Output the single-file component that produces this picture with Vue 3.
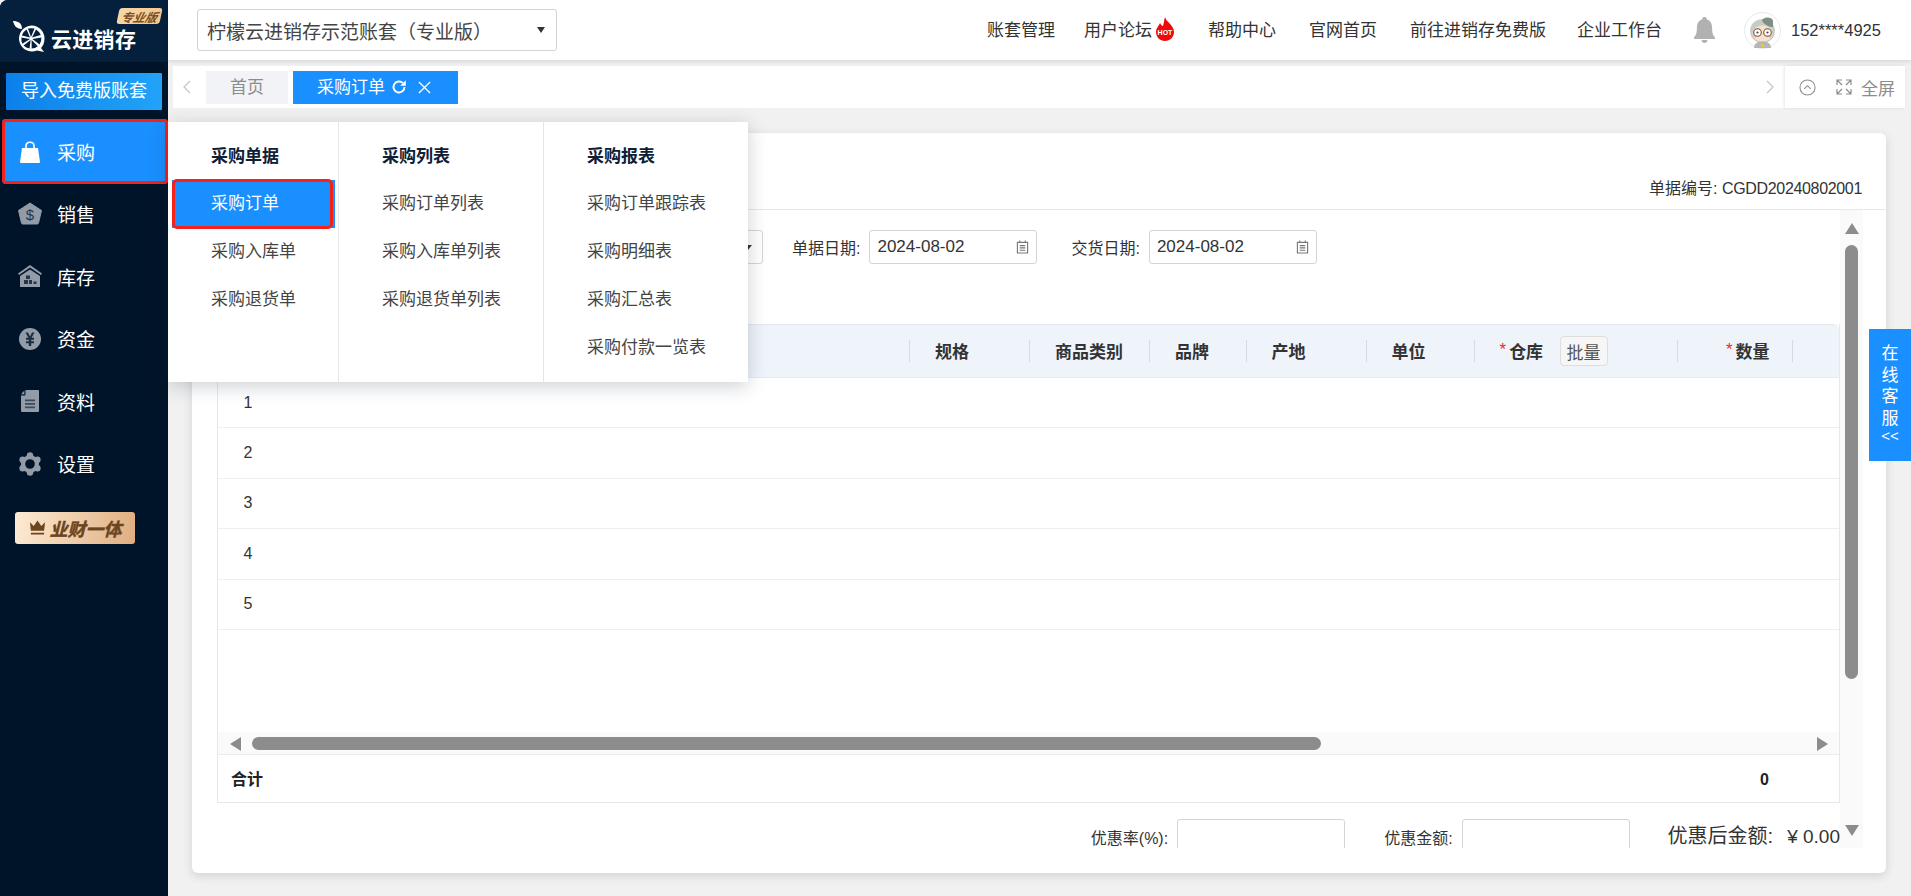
<template>
  <div class="app">
    <aside class="sidebar">
      <div class="logo">
        <svg class="logo-icon" viewBox="0 0 32 32" width="32" height="32">
          <path d="M0 0 C5 0 9 2 9 8 C4 8 1 5 0 0Z" fill="#fff" />
          <path d="M18.5 4.5 A13 13 0 0 1 31.5 17.5 C31.5 22 30 25 28 27 L31 31 L24 29.5 A13 13 0 1 1 18.5 4.5Z" fill="#fff" />
          <g fill="#04203d">
            <path d="M18 16 L15 7.6 Q18.5 6.8 21.5 7.6Z" />
            <path d="M19 16.4 L23 8.6 Q26.6 10.8 27.8 14Z" />
            <path d="M19.4 18 L28.3 16.6 Q28.6 20.6 26.6 23.4Z" />
            <path d="M18.6 19 L24.8 25.2 Q22 27.4 18.6 27.6Z" />
            <path d="M17.6 19 L16.6 27.4 Q13 27 10.6 24.6Z" />
            <path d="M17 18 L9.4 22.8 Q8 20 8.4 16.4Z" />
            <path d="M17 16.6 L8.8 14.6 Q10 10.6 13.6 8.6Z" />
          </g>
        </svg>
        <span class="logo-text">云进销存</span>
        <span class="logo-tag"><i>专业版</i></span>
      </div>
      <div class="import-btn">导入免费版账套</div>
      <ul class="menu">
        <li v-for="item in menu" :key="item.name" class="menu-item" :class="{ active: item.active }">
          <svg class="menu-icon" viewBox="0 0 24 24" width="24" height="24" v-html="item.icon"></svg>
          <span>{{ item.name }}</span>
        </li>
      </ul>
      <div class="vip">
        <svg viewBox="0 0 18 16" width="17" height="16"><path d="M1 2 L5 6 L9 0 L13 6 L17 2 L16 11 H2Z M2 13 H16 V15 H2Z" fill="#6b4420" /></svg>
        <span>业财一体</span>
      </div>
    </aside>

    <div class="main">
      <header class="topbar">
        <div class="account-select">
          <span>柠檬云进销存示范账套（专业版）</span>
          <i class="caret"></i>
        </div>
        <nav class="top-nav">
          <a class="first">账套管理</a>
          <a class="forum">用户论坛
            <svg viewBox="0 0 20 24" width="20" height="24">
              <path d="M10 0 C11 5 19 8 19 15 C19 20 15 24 10 24 C5 24 1 20 1 15 C1 11 4 9 5 6 C6 8 7 9 8 9 C9 6 9 3 10 0Z" fill="#ee0a0a" />
              <text x="10" y="18" text-anchor="middle" class="hot-text">HOT</text>
            </svg>
          </a>
          <a>帮助中心</a>
          <a>官网首页</a>
          <a>前往进销存免费版</a>
          <a>企业工作台</a>
        </nav>
        <svg class="bell" viewBox="0 0 18 26" width="21" height="26" preserveAspectRatio="none">
          <path d="M9 0 C10.5 0 11 1 11 2.4 C14.5 3.6 15.5 7 15.5 11 C15.5 16 16.5 18.5 18 20.5 V22 H0 V20.5 C1.5 18.5 2.5 16 2.5 11 C2.5 7 3.5 3.6 7 2.4 C7 1 7.5 0 9 0Z M6.5 23 H11.5 C11.5 25 10.3 26 9 26 C7.7 26 6.5 25 6.5 23Z" fill="#b1b1b1" />
        </svg>
        <div class="avatar">
          <svg viewBox="0 0 37 37" width="37" height="37">
            <circle cx="18.5" cy="18.5" r="18" fill="#fff" stroke="#e8e8e8" />
            <ellipse cx="18.5" cy="19" rx="12.5" ry="12" fill="#c8ccc6" />
            <path d="M18 9 C18 5 28 4 29 9 L29 15 C25 15 21 13 18 9Z" fill="#7e8f83" />
            <ellipse cx="18.5" cy="21.5" rx="10" ry="8" fill="#f5e3d2" />
            <circle cx="10.5" cy="24" r="2" fill="#f4c4b8" />
            <circle cx="26.5" cy="24" r="2" fill="#f4c4b8" />
            <circle cx="13.5" cy="20.5" r="3.8" fill="#fff" stroke="#7a5234" stroke-width="1.1" />
            <circle cx="23.5" cy="20.5" r="3.8" fill="#fff" stroke="#7a5234" stroke-width="1.1" />
            <circle cx="13.5" cy="20.5" r="1.1" fill="#444" />
            <circle cx="23.5" cy="20.5" r="1.1" fill="#444" />
            <path d="M10 36 C10 31 14 29.5 18.5 29.5 C23 29.5 27 31 27 36Z" fill="#b4b8b4" />
            <circle cx="18.5" cy="33.5" r="1.8" fill="#f2c230" />
          </svg>
        </div>
        <span class="phone">152****4925</span>
      </header>

      <div class="tabs">
        <div class="tabs-left">
          <svg class="chev" viewBox="0 0 8 14" width="8" height="14"><path d="M7 1 L1 7 L7 13" fill="none" stroke="#c4c4c4" stroke-width="1.2" /></svg>
          <div class="tab">首页</div>
          <div class="tab current">
            <span>采购订单</span>
            <svg viewBox="0 0 16 16" width="16" height="16"><path d="M13.5 8 A5.5 5.5 0 1 1 11.8 4" fill="none" stroke="#fff" stroke-width="1.9" /><path d="M14.8 1.2 V6.8 H9.2Z" fill="#fff" /></svg>
            <svg viewBox="0 0 14 14" width="13" height="13"><path d="M1 1 L13 13 M13 1 L1 13" stroke="#fff" stroke-width="1.4" /></svg>
          </div>
        </div>
        <svg class="chev" viewBox="0 0 8 14" width="8" height="14"><path d="M1 1 L7 7 L1 13" fill="none" stroke="#c4c4c4" stroke-width="1.2" /></svg>
        <div class="tabs-tools">
          <svg viewBox="0 0 18 18" width="17" height="17"><circle cx="9" cy="9" r="8" fill="none" stroke="#8c8c8c" stroke-width="1.1" /><path d="M5.5 10.5 L9 7 L12.5 10.5" fill="none" stroke="#8c8c8c" stroke-width="1.1" /></svg>
          <span class="full">
            <svg viewBox="0 0 16 16" width="16" height="16"><path d="M6 1 H1 V6 M1 1 L6 6 M10 1 H15 V6 M15 1 L10 6 M1 10 V15 H6 M1 15 L6 10 M15 10 V15 H10 M15 15 L10 10" fill="none" stroke="#8c8c8c" stroke-width="1.2" /></svg>
            全屏
          </span>
        </div>
      </div>

      <section class="card">
        <div class="card-head">单据编号: <span class="bill-no">CGDD20240802001</span></div>
        <div class="card-body">
          <div class="bill">
            <div class="form-row">
              <div class="field supplier"><i class="caret small"></i></div>
              <label class="date-label">单据日期:</label>
              <div class="field date">2024-08-02<svg viewBox="0 0 14 15" width="13" height="14"><path d="M1.5 2.5 H12.5 V14 H1.5Z M4 .5 V3 M10 .5 V3 M4 6 H10 M4 8.5 H10 M4 11 H10" fill="none" stroke="#777" stroke-width="1.2" /></svg></div>
              <label class="date-label second">交货日期:</label>
              <div class="field date">2024-08-02<svg viewBox="0 0 14 15" width="13" height="14"><path d="M1.5 2.5 H12.5 V14 H1.5Z M4 .5 V3 M10 .5 V3 M4 6 H10 M4 8.5 H10 M4 11 H10" fill="none" stroke="#777" stroke-width="1.2" /></svg></div>
            </div>

            <div class="table">
              <div class="thead">
                <div class="th"></div>
                <div v-for="col in columns" :key="col.name" class="th" :class="{ right: col.right }">
                  <em v-if="col.required">*</em>{{ col.name }}
                  <button v-if="col.batch" class="batch">批量</button>
                </div>
                <div class="th last"></div>
              </div>
              <div v-for="n in 5" :key="n" class="tr"><span>{{ n }}</span></div>
              <div class="table-space"></div>
              <div class="hscroll">
                <i class="arrow-left"></i>
                <div class="hthumb"></div>
                <i class="arrow-right"></i>
              </div>
              <div class="total">
                <b>合计</b>
                <b class="total-num">0</b>
              </div>
            </div>

            <div class="discount">
              <label>优惠率(%):</label>
              <div class="discount-input"></div>
              <label class="gap">优惠金额:</label>
              <div class="discount-input"></div>
              <span class="after">优惠后金额:</span>
              <span class="after-num">¥ 0.00</span>
            </div>
          </div>
          <div class="vscroll">
            <i class="arrow-up"></i>
            <div class="vthumb"></div>
            <i class="arrow-down"></i>
          </div>
        </div>
      </section>
    </div>

    <!-- 采购 flyout -->
    <div class="flyout">
      <div v-for="(group, i) in flyout" :key="group.title" class="fly-col">
        <h4>{{ group.title }}</h4>
        <a v-for="link in group.links" :key="link" :class="{ on: i === 0 && link === '采购订单' }">{{ link }}</a>
      </div>
    </div>

    <div class="service">
      <span>在</span><span>线</span><span>客</span><span>服</span>
      <small>&lt;&lt;</small>
    </div>
  </div>
</template>

<script setup>
const gray = '#929ba8'

const menu = [
  {
    name: '采购',
    active: true,
    icon: '<path d="M2 22 L4 8 H20 L22 22 Q22 23 21 23 H3 Q2 23 2 22Z" fill="#fff"/><path d="M8 11 V6 C8 1 16 1 16 6 V11" fill="none" stroke="#fff" stroke-width="1.6"/>'
  },
  {
    name: '销售',
    icon: `<path d="M12 1 L23.5 8.5 L20.5 21 Q20.3 22 19 22 H5 Q3.7 22 3.5 21 L.5 8.5Z" fill="${gray}" stroke="${gray}" stroke-linejoin="round"/><text x="12" y="18" text-anchor="middle" font-size="15" font-family="Liberation Sans" font-weight="400" fill="#25364a">$</text>`
  },
  {
    name: '库存',
    icon: `<path d="M12 1 L24 9.5 L23 11 L12 3.5 L1 11 L0 9.5Z" fill="${gray}"/><path d="M2 12 L12 5.5 L22 12 V23 H2Z" fill="${gray}"/><path d="M8 11.5 H12 V15 H8Z M6 16 H10 V20 H6Z M11 16 H14 V20 H11Z M15.5 17.5 H18.5 V20 H15.5Z" fill="#25364a"/>`
  },
  {
    name: '资金',
    icon: `<circle cx="12" cy="12" r="11" fill="${gray}"/><path d="M7.5 5.5 L10 5.5 L12 9.5 L14 5.5 L16.5 5.5 L13.6 10.8 H16 V12.8 H13.2 V14.2 H16 V16.2 H13.2 V19 H10.8 V16.2 H8 V14.2 H10.8 V12.8 H8 V10.8 H10.4Z" fill="#1b2d42"/>`
  },
  {
    name: '资料',
    icon: `<path d="M7.5 1 H20 Q21 1 21 2 V22 Q21 23 20 23 H4 Q3 23 3 22 V6.5 H6.5 Q7.5 6.5 7.5 5.5Z" fill="${gray}"/><path d="M3 5.2 L6.4 1.4 V5.2Z" fill="${gray}"/><path d="M7 10.5 H17 V12.3 H7Z M7 14 H17 V15.8 H7Z M7 17.5 H17 V19.3 H7Z" fill="#3c4a5b"/>`
  },
  {
    name: '设置',
    icon: `<g fill="${gray}"><circle cx="12" cy="12" r="9"/><circle cx="12" cy="3.4" r="3.2"/><circle cx="12" cy="20.6" r="3.2"/><circle cx="4.6" cy="7.7" r="3.2"/><circle cx="19.4" cy="7.7" r="3.2"/><circle cx="4.6" cy="16.3" r="3.2"/><circle cx="19.4" cy="16.3" r="3.2"/></g><circle cx="12" cy="12" r="4.8" fill="#001429"/>`
  }
]

const columns = [
  { name: '规格' },
  { name: '商品类别' },
  { name: '品牌' },
  { name: '产地' },
  { name: '单位' },
  { name: '仓库', required: true, batch: true },
  { name: '数量', required: true, right: true }
]

const flyout = [
  { title: '采购单据', links: ['采购订单', '采购入库单', '采购退货单'] },
  { title: '采购列表', links: ['采购订单列表', '采购入库单列表', '采购退货单列表'] },
  { title: '采购报表', links: ['采购订单跟踪表', '采购明细表', '采购汇总表', '采购付款一览表'] }
]
</script>

<style>
html,
body {
  margin: 0;
  background: #f1f1f1;
  overflow: hidden;
}
</style>

<style scoped>
.app {
  position: relative;
  display: flex;
  width: 1911px;
  height: 896px;
  overflow: hidden;
  background: #f1f1f1;
  font-family: "Liberation Sans", "Noto Sans CJK SC", sans-serif;
  color: #333;
}

.sidebar {
  width: 168px;
  flex: none;
  background: #001429;
  color: #fff;
  border-top-left-radius: 8px;
}

.logo {
  position: relative;
  height: 62px;
  background: #04203d;
  border-top-left-radius: 8px;
  display: flex;
  align-items: flex-start;
  padding-left: 13px;
  box-sizing: border-box;
}

.logo-icon {
  flex: none;
  margin: 21px 6px 0 0;
}

.logo-text {
  margin-top: 27px;
  line-height: 26px;
  font-size: 21px;
  font-weight: 700;
  white-space: nowrap;
  letter-spacing: 0.3px;
}

.logo-tag {
  position: absolute;
  left: 118px;
  top: 8px;
  width: 43px;
  height: 16px;
  border-radius: 3px;
  background: linear-gradient(90deg, #f8d6a8, #f2c890);
  transform: skewX(-12deg);
  display: flex;
  align-items: center;
  justify-content: center;
}

.logo-tag i {
  font-size: 12px;
  font-weight: 700;
  color: #7a4f22;
}

.import-btn {
  margin: 11px 6px 0;
  height: 37px;
  line-height: 37px;
  text-align: center;
  font-size: 18px;
  background: linear-gradient(90deg, #0c80ea, #22a3f8);
  border-radius: 1px;
  white-space: nowrap;
}

.menu {
  list-style: none;
  margin: 9px 0 0;
  padding: 0;
}

.menu-item {
  display: flex;
  align-items: center;
  height: 62.5px;
  padding-left: 18px;
  font-size: 19px;
  box-sizing: border-box;
}

.menu-icon {
  margin-right: 15px;
  flex: none;
}

.menu-item.active {
  background: #1a8fff;
  outline: 3px solid #f5211b;
  outline-offset: -3px;
  border-radius: 4px;
  height: 65px;
  margin: 0 0 -1.5px 2px;
  padding-left: 16px;
}

.vip {
  margin: 17px 0 0 15px;
  width: 120px;
  height: 32px;
  border-radius: 3px;
  background: linear-gradient(100deg, #fdebd5, #dfae80);
  color: #6b4420;
  display: flex;
  align-items: center;
  justify-content: center;
  gap: 4px;
  font-size: 18px;
  font-weight: 700;
  font-style: italic;
  -webkit-text-stroke: 0.4px #6b4420;
  white-space: nowrap;
}

.main {
  flex: 1;
  min-width: 0;
  display: flex;
  flex-direction: column;
}

.topbar {
  height: 60px;
  flex: none;
  background: #fff;
  display: flex;
  align-items: center;
  padding-left: 29px;
  box-shadow: 0 1px 5px rgba(0, 0, 0, 0.14);
  position: relative;
}

.account-select {
  width: 360px;
  height: 42px;
  box-sizing: border-box;
  border: 1px solid #d3d3d3;
  border-radius: 3px;
  padding: 0 11px 0 9px;
  display: flex;
  align-items: center;
  justify-content: space-between;
  font-size: 19px;
  color: #444;
  white-space: nowrap;
}

.caret {
  width: 0;
  height: 0;
  border: 4.5px solid transparent;
  border-top: 6px solid #333;
  border-bottom: 0;
}

.top-nav {
  margin-left: 430px;
  padding-bottom: 3px;
  display: flex;
  align-items: center;
  font-size: 17px;
  color: #333;
}

.top-nav a {
  margin-right: 33px;
  white-space: nowrap;
  display: flex;
  align-items: center;
  height: 24px;
}

.top-nav a.first {
  margin-right: 29px;
}

.top-nav a:nth-last-child(2) {
  margin-right: 31px;
}

.top-nav a:last-child {
  margin-right: 30px;
}

.top-nav .forum svg {
  margin-left: 3px;
}

.hot-text {
  font-family: "Liberation Sans", sans-serif;
  font-size: 7px;
  font-weight: 700;
  fill: #fff;
}

.bell {
  margin-left: 2px;
  flex: none;
}

.avatar {
  margin-left: 29px;
  height: 37px;
  flex: none;
}

.phone {
  margin-left: 10px;
  font-size: 16.5px;
  color: #333;
  white-space: nowrap;
}

.tabs {
  height: 42px;
  margin: 6px 6px 0 5px;
  flex: none;
  background: #fff;
  display: flex;
  align-items: center;
  box-sizing: border-box;
  padding-left: 10px;
}

.tabs-left {
  flex: 1;
  display: flex;
  align-items: center;
}

.chev {
  flex: none;
}

.tab {
  height: 33px;
  line-height: 33px;
  width: 82px;
  margin-left: 15px;
  text-align: center;
  background: #f2f3f7;
  color: #8c8c8c;
  font-size: 17px;
}

.tab.current {
  width: 165px;
  margin-left: 5px;
  background: #1a8fff;
  color: #fff;
  display: flex;
  align-items: center;
  padding-left: 24px;
  box-sizing: border-box;
}

.tab.current svg:first-of-type {
  margin: 0 11px 0 6px;
}

.tabs-tools {
  width: 120px;
  height: 42px;
  flex: none;
  margin-left: 11px;
  box-shadow: -1px 0 3px rgba(0, 0, 0, 0.1);
  display: flex;
  align-items: center;
  padding-left: 14px;
  box-sizing: border-box;
  color: #8c8c8c;
  font-size: 17px;
}

.full {
  display: flex;
  align-items: center;
  gap: 9px;
  margin-left: 20px;
  white-space: nowrap;
}

.card {
  margin: 25px 25px 0 24px;
  height: 740px;
  background: #fff;
  border-radius: 6px;
  box-shadow: 0 3px 10px rgba(40, 50, 70, 0.16);
  display: flex;
  flex-direction: column;
}

.card-head {
  height: 77px;
  flex: none;
  box-sizing: border-box;
  border-bottom: 1px solid #e8e8e8;
  padding: 46px 24px 0 0;
  text-align: right;
  font-size: 16px;
  line-height: 20px;
  color: #333;
}

.bill-no {
  letter-spacing: -0.33px;
}

.card-body {
  height: 638px;
  padding-left: 25px;
  display: flex;
  overflow: hidden;
}

.bill {
  width: 1623px;
  flex: none;
  display: flex;
  flex-direction: column;
}

.form-row {
  display: flex;
  align-items: center;
  margin-top: 20px;
  height: 34px;
  flex: none;
}

.field {
  height: 34px;
  box-sizing: border-box;
  border: 1px solid #d5d5d5;
  border-radius: 3px;
  display: flex;
  align-items: center;
  justify-content: space-between;
  padding: 0 7px;
  font-size: 17px;
  color: #333;
}

.field.supplier {
  width: 546px;
  justify-content: flex-end;
  padding-right: 10px;
}

.caret.small {
  border-width: 4px;
  border-top-width: 5px;
}

.field.date {
  width: 168px;
}

.date-label {
  font-size: 16px;
  color: #333;
  margin: 0 9px 0 29px;
  white-space: nowrap;
}

.date-label.second {
  margin-left: 34px;
}

.table {
  margin-top: 60px;
  flex: none;
  height: 479px;
  display: flex;
  flex-direction: column;
  box-sizing: border-box;
  border-left: 1px solid #e8e8e8;
  border-right: 1px solid #e8e8e8;
}

.thead {
  height: 54px;
  flex: none;
  box-sizing: border-box;
  background: #eff4fb;
  border-top: 1px solid #e4e7ec;
  border-bottom: 1px solid #e8ebf0;
  border-radius: 6px 6px 0 0;
  display: grid;
  grid-template-columns: 692px 120px 120px 96.5px 120px 108px 203.5px 114.5px 1fr;
  align-items: center;
  font-size: 17px;
  font-weight: 700;
  color: #333;
}

.th {
  position: relative;
  padding: 0 0 2px 25px;
  display: flex;
  align-items: center;
  white-space: nowrap;
  height: 22px;
  border-right: 1px solid #d4dbe6;
  box-sizing: border-box;
}

.th.last {
  border-right: 0;
}

.th.right {
  justify-content: flex-end;
  padding-right: 22px;
}

.th em {
  color: #f5222d;
  font-style: normal;
  font-weight: 400;
  margin-right: 3px;
}

.batch {
  position: absolute;
  left: 85px;
  top: -4px;
  width: 48px;
  height: 30px;
  padding: 0;
  border: 1px solid #ddd;
  border-radius: 4px;
  background: #f6f6f6;
  font: 400 17px "Liberation Sans", "Noto Sans CJK SC", sans-serif;
  color: #555;
}

.tr {
  height: 50.4px;
  flex: none;
  box-sizing: border-box;
  border-bottom: 1px solid #eeeff4;
  display: flex;
  align-items: center;
  font-size: 16px;
  color: #333;
}

.tr span {
  width: 60px;
  text-align: center;
}

.table-space {
  flex: 1;
}

.hscroll {
  height: 23px;
  flex: none;
  background: #fafafa;
  border-bottom: 1px solid #ececec;
  box-sizing: border-box;
  display: flex;
  align-items: center;
  position: relative;
}

.arrow-left,
.arrow-right,
.arrow-up,
.arrow-down {
  position: absolute;
  width: 0;
  height: 0;
  border: 0 solid transparent;
}

.arrow-left {
  left: 12px;
  top: 5px;
  border-width: 7px 11px 7px 0;
  border-right-color: #8c8c8c;
}

.arrow-right {
  right: 11px;
  top: 5px;
  border-width: 7px 0 7px 11px;
  border-left-color: #8c8c8c;
}

.hthumb {
  margin-left: 34px;
  width: 1069px;
  height: 13px;
  background: #8c8c8c;
  border-radius: 7px;
}

.total {
  height: 48px;
  flex: none;
  box-sizing: border-box;
  border-bottom: 1px solid #e8e8e8;
  padding: 0 0 2px 13px;
  position: relative;
  display: flex;
  align-items: center;
  font-size: 16px;
  color: #222;
}

.total-num {
  position: absolute;
  left: 1542px;
  margin-top: 5px;
}

.discount {
  margin-top: 16px;
  height: 40px;
  flex: none;
  display: flex;
  align-items: flex-start;
  justify-content: flex-end;
  font-size: 16px;
  color: #333;
}

.discount label {
  margin: 6px 9px 0 0;
  white-space: nowrap;
}

.discount label.gap {
  margin-left: 39px;
}

.discount-input {
  width: 168px;
  height: 40px;
  box-sizing: border-box;
  border: 1px solid #d5d5d5;
  border-radius: 3px;
}

.after {
  margin: 7px 0 0 38px;
  font-size: 20px;
  line-height: 21px;
  white-space: nowrap;
}

.after-num {
  margin: 7px 0 0 14px;
  font-size: 19px;
  line-height: 21px;
  white-space: nowrap;
}

.vscroll {
  width: 23px;
  flex: none;
  background: #fafafa;
  position: relative;
}

.arrow-up {
  left: 5px;
  top: 13px;
  border-width: 0 7px 11px;
  border-bottom-color: #8c8c8c;
}

.arrow-down {
  left: 5px;
  top: 615px;
  border-width: 11px 7px 0;
  border-top-color: #8c8c8c;
}

.vthumb {
  position: absolute;
  left: 5px;
  top: 35px;
  width: 13px;
  height: 434px;
  border-radius: 7px;
  background: #8c8c8c;
}

.flyout {
  position: absolute;
  left: 168px;
  top: 122px;
  width: 580px;
  height: 260px;
  background: #fff;
  box-shadow: 0 4px 18px rgba(30, 40, 60, 0.22);
  display: grid;
  grid-template-columns: 171px 205px 204px;
}

.fly-col {
  border-right: 1px solid #e6e6e6;
  display: flex;
  flex-direction: column;
  padding-top: 11px;
}

.fly-col:last-child {
  border-right: 0;
}

.fly-col h4 {
  margin: 0;
  height: 47px;
  line-height: 47px;
  padding-left: 43px;
  font-size: 17px;
  font-weight: 700;
  color: #0d2036;
}

.fly-col a {
  height: 48px;
  line-height: 48px;
  padding-left: 43px;
  font-size: 17px;
  color: #444;
  white-space: nowrap;
}

.fly-col a.on {
  position: relative;
  margin: 0 3px 0 4px;
  padding-left: 39px;
  background: #1a8fff;
  color: #fff;
}

/* red marker laid over the selected link */
.fly-col a.on::after {
  content: "";
  position: absolute;
  inset: -1px 2px -1px 0;
  border: 3px solid #f5211b;
  border-radius: 5px;
}

.service {
  position: absolute;
  left: 1869px;
  top: 329px;
  width: 42px;
  height: 132px;
  background: #1a8fff;
  color: #fff;
  font-size: 17px;
  display: flex;
  flex-direction: column;
  align-items: center;
  padding-top: 14px;
  box-sizing: border-box;
}

.service span {
  height: 21.5px;
  line-height: 21.5px;
}

.service small {
  font-size: 15px;
  line-height: 14px;
}
</style>
